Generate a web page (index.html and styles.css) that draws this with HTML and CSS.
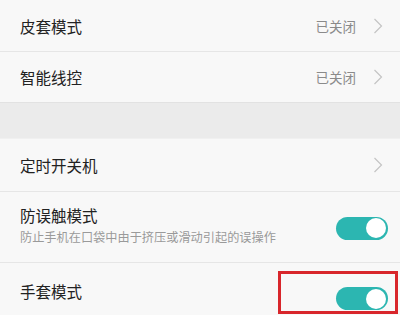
FILE: index.html
```html
<!DOCTYPE html>
<html lang="zh">
<head>
<meta charset="utf-8">
<link rel="stylesheet" href="styles.css">
</head>
<body>
<div class="list">
  <div class="row row-a">
    <span class="title">皮套模式</span>
    <span class="value">已关闭</span>
    <svg class="chev" width="10" height="16" viewBox="0 0 10 16"><path d="M1.5 1 L8.5 8 L1.5 15" fill="none" stroke="#c4c4c4" stroke-width="1.2"/></svg>
  </div>
  <div class="row row-b">
    <span class="title">智能线控</span>
    <span class="value">已关闭</span>
    <svg class="chev" width="10" height="16" viewBox="0 0 10 16"><path d="M1.5 1 L8.5 8 L1.5 15" fill="none" stroke="#c4c4c4" stroke-width="1.2"/></svg>
  </div>
  <div class="gap"></div>
  <div class="row row-c">
    <span class="title">定时开关机</span>
    <svg class="chev" width="10" height="16" viewBox="0 0 10 16"><path d="M1.5 1 L8.5 8 L1.5 15" fill="none" stroke="#c4c4c4" stroke-width="1.2"/></svg>
  </div>
  <div class="row row-d">
    <div class="text">
      <span class="title">防误触模式</span>
      <span class="sub">防止手机在口袋中由于挤压或滑动引起的误操作</span>
    </div>
    <span class="toggle"><span class="knob"></span></span>
  </div>
  <div class="row row-e">
    <span class="title">手套模式</span>
    <span class="toggle toggle-low"><span class="knob"></span></span>
    <span class="highlight"></span>
  </div>
</div>
</body>
</html>
```
FILE: styles.css
```css
html, body {
  margin: 0;
  padding: 0;
  background: #f8f8f8;
  font-family: "Noto Sans CJK SC", "Noto Sans", sans-serif;
  overflow: hidden;
}
.list {
  width: 400px;
  height: 315px;
  position: relative;
  display: flex;
  flex-direction: column;
}
.row {
  display: flex;
  align-items: center;
  padding: 0 17px 0 20px;
  background: #f8f8f8;
  border-bottom: 1px solid #e6e6e6;
  box-sizing: border-box;
  position: relative;
  flex-shrink: 0;
}
.row-a { height: 52px; }
.row-b { height: 51px; border-bottom: 1px solid #e2e2e2; }
.gap {
  height: 36px;
  background: #ebebeb;
  border-bottom: 1px solid #f0f0f0;
  box-sizing: border-box;
  flex-shrink: 0;
}
.row-c { height: 53px; }
.row-d { height: 71px; padding-right: 12px; }
.row-e { height: 60px; border-bottom: none; padding-right: 12px; align-items: flex-start; padding-top: 18px; }
.title {
  font-size: 15.5px;
  color: #222;
  line-height: 20px;
  flex: 1;
}
.value {
  font-size: 13.5px;
  color: #8a8a8a;
  margin-right: 17px;
}
.chev { display: block; }
.text {
  flex: 1;
  display: flex;
  flex-direction: column;
  margin-top: -4px;
}
.text .title { flex: none; }
.sub {
  font-size: 12.2px;
  color: #9a9a9a;
  line-height: 16px;
  margin-top: 4px;
  white-space: nowrap;
}
.toggle {
  width: 52px;
  height: 23px;
  border-radius: 12px;
  background: #2cb6b1;
  position: relative;
  flex-shrink: 0;
  margin-top: 2px;
}
.toggle-low { margin-top: 6px; }
.knob {
  position: absolute;
  right: 2px;
  top: 1.5px;
  width: 20px;
  height: 20px;
  border-radius: 50%;
  background: #fff;
}
.highlight {
  position: absolute;
  left: 278px;
  top: 8px;
  width: 120px;
  height: 43px;
  border: 3px solid #d8262b;
  box-sizing: border-box;
}
```
